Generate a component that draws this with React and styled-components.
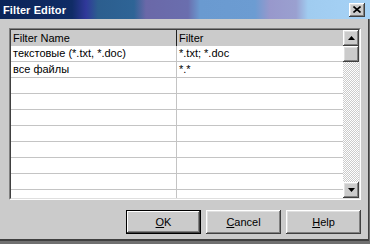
import styled, { createGlobalStyle } from "styled-components";

const GlobalStyle = createGlobalStyle`
  html, body {
    margin: 0;
    padding: 0;
    background: #cbcbcb;
  }
  body {
    font-family: "Liberation Sans", Arial, sans-serif;
    font-size: 11px;
    color: #000;
  }
`;

const filters = [
  { name: "текстовые (*.txt, *.doc)", mask: "*.txt; *.doc" },
  { name: "все файлы", mask: "*.*" },
];

const EMPTY_ROWS = 8;

const bevelOut = `
  box-shadow: inset -1px -1px 0 #404040, inset 1px 1px 0 #ffffff,
    inset -2px -2px 0 #808080, inset 2px 2px 0 #dfdfdf;
`;

const Window = styled.div`
  width: 370px;
  height: 244px;
  display: flex;
  flex-direction: column;
  background: #cbcbcb;
  overflow: hidden;
`;

const TitleBar = styled.div`
  height: 19px;
  flex: none;
  display: flex;
  align-items: center;
  justify-content: space-between;
  padding-left: 3px;
  background: linear-gradient(
    90deg,
    #0a2458 0px,
    #102c66 72px,
    #30389a 86px,
    #2c5e8e 98px,
    #2e6496 134px,
    #6a68a8 146px,
    #6a6eae 188px,
    #6a9ad0 200px,
    #6c9cd2 255px,
    #9898cc 270px,
    #9aa0d0 296px,
    #a0ccf0 308px,
    #a6d2f6 370px
  );
`;

const Title = styled.span`
  color: #fff;
  font-weight: bold;
  font-size: 11px;
  letter-spacing: 0.1px;
`;

const CloseButton = styled.div`
  width: 16px;
  height: 14px;
  margin-right: 5px;
  background: #cbcbcb;
  display: flex;
  align-items: center;
  justify-content: center;
  ${bevelOut}
`;

const Body = styled.div`
  flex: 1;
  display: flex;
  flex-direction: column;
  padding: 9px 9px 0 9px;
  box-shadow: inset -1px -3px 0 #707070, inset -2px -5px 0 #404040;
`;

const Frame = styled.div`
  height: 172px;
  display: flex;
  box-sizing: border-box;
  border-style: solid;
  border-width: 1px;
  border-color: #808080 #ffffff #ffffff #808080;
`;

const FrameInner = styled.div`
  flex: 1;
  display: flex;
  border-style: solid;
  border-width: 1px;
  border-color: #404040 #dfdfdf #dfdfdf #404040;
  overflow: hidden;
`;

const Table = styled.div`
  flex: 1;
  display: flex;
  flex-direction: column;
  background: #fff;
  overflow: hidden;
`;

const Row = styled.div`
  display: grid;
  grid-template-columns: 166px 1fr;
  height: 16px;
  flex: none;
  box-sizing: border-box;
  border-bottom: ${(p) => (p.$header ? "none" : "1px solid #c4c4c4")};
  background: ${(p) => (p.$header ? "#cbcbcb" : "#fff")};
`;

const Cell = styled.div`
  padding-left: 2px;
  line-height: ${(p) => (p.$header ? "16px" : "15px")};
  white-space: nowrap;
  overflow: hidden;
  box-sizing: border-box;
  &:first-child {
    border-right: 1px solid ${(p) => (p.$header ? "#202020" : "#c4c4c4")};
  }
`;

const ScrollBar = styled.div`
  width: 16px;
  flex: none;
  display: flex;
  flex-direction: column;
`;

const ScrollButton = styled.div`
  height: 16px;
  flex: none;
  background: #cbcbcb;
  display: flex;
  align-items: center;
  justify-content: center;
  ${bevelOut}
`;

const Track = styled.div`
  flex: 1;
  background-color: #cbcbcb;
  background-image: repeating-conic-gradient(#ffffff 0 25%, #cbcbcb 0 50%);
  background-size: 2px 2px;
`;

const Buttons = styled.div`
  display: flex;
  justify-content: flex-end;
  gap: 5px;
  margin-top: 10px;
`;

const Button = styled.div`
  width: 75px;
  height: 24px;
  box-sizing: border-box;
  display: flex;
  align-items: center;
  justify-content: center;
  background: #cbcbcb;
  ${(p) =>
    p.$default
      ? `border: 1px solid #000;
         box-shadow: inset -1px -1px 0 #404040, inset 1px 1px 0 #ffffff,
           inset -2px -2px 0 #808080;`
      : bevelOut}
  u {
    text-decoration: underline;
    text-underline-offset: 1px;
  }
`;

const Arrow = ({ down }) => (
  <svg width="7" height="4" viewBox="0 0 7 4">
    <path d={down ? "M0 0H7L3.5 4Z" : "M0 4H7L3.5 0Z"} fill="#000" />
  </svg>
);

const CloseGlyph = () => (
  <svg width="8" height="7" viewBox="0 0 8 7">
    <path d="M0.5 0.5L7.5 6.5M7.5 0.5L0.5 6.5" stroke="#000" strokeWidth="1.6" />
  </svg>
);

export default function App() {
  return (
    <Window>
      <GlobalStyle />
      <TitleBar>
        <Title>Filter Editor</Title>
        <CloseButton>
          <CloseGlyph />
        </CloseButton>
      </TitleBar>
      <Body>
        <Frame>
          <FrameInner>
            <Table>
              <Row $header>
                <Cell $header>Filter Name</Cell>
                <Cell $header>Filter</Cell>
              </Row>
              {filters.map((f) => (
                <Row key={f.name}>
                  <Cell>{f.name}</Cell>
                  <Cell>{f.mask}</Cell>
                </Row>
              ))}
              {Array.from({ length: EMPTY_ROWS }, (_, i) => (
                <Row key={"empty" + i}>
                  <Cell />
                  <Cell />
                </Row>
              ))}
            </Table>
            <ScrollBar>
              <ScrollButton>
                <Arrow />
              </ScrollButton>
              <ScrollButton />
              <Track />
              <ScrollButton>
                <Arrow down />
              </ScrollButton>
            </ScrollBar>
          </FrameInner>
        </Frame>
        <Buttons>
          <Button $default>
            <span>
              <u>O</u>K
            </span>
          </Button>
          <Button>
            <span>
              <u>C</u>ancel
            </span>
          </Button>
          <Button>
            <span>
              <u>H</u>elp
            </span>
          </Button>
        </Buttons>
      </Body>
    </Window>
  );
}
